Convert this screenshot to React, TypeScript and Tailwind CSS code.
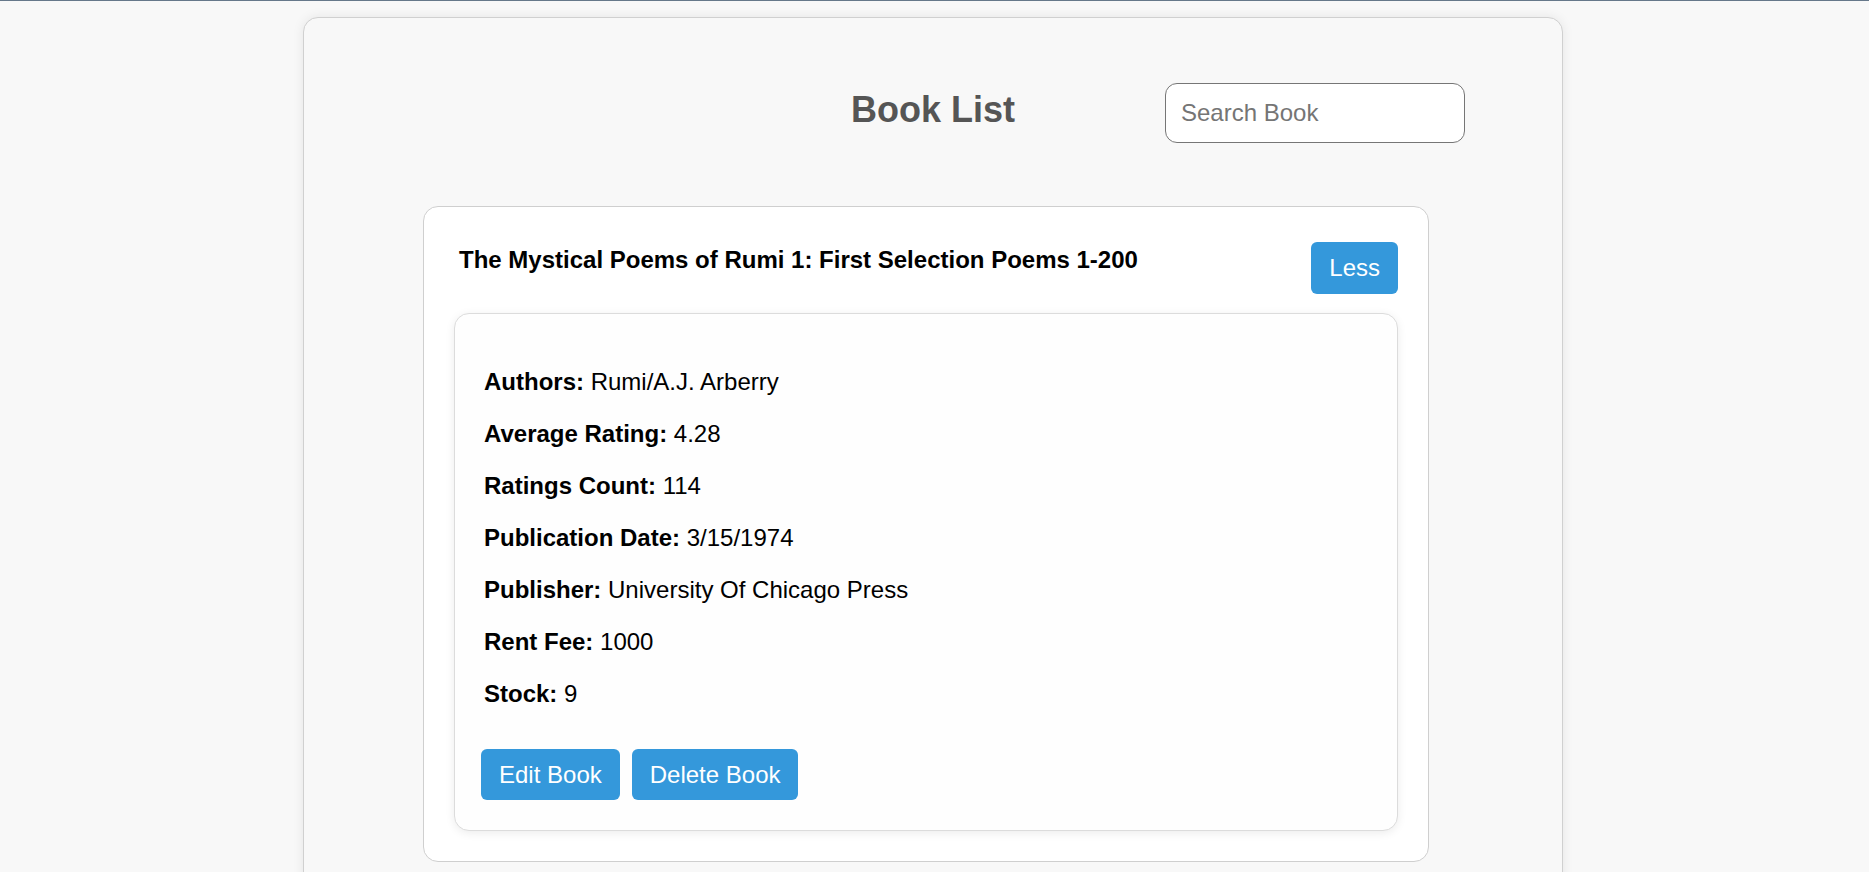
import React from 'react';

type Book = {
  title: string;
  authors: string;
  averageRating: string;
  ratingsCount: string;
  publicationDate: string;
  publisher: string;
  rentFee: string;
  stock: string;
};

const book: Book = {
  title: 'The Mystical Poems of Rumi 1: First Selection Poems 1-200',
  authors: 'Rumi/A.J. Arberry',
  averageRating: '4.28',
  ratingsCount: '114',
  publicationDate: '3/15/1974',
  publisher: 'University Of Chicago Press',
  rentFee: '1000',
  stock: '9',
};

function Detail({ label, value }: { label: string; value: string }) {
  return (
    <p className="pl-[3px] leading-[27.6px]">
      <strong className="font-bold">{label}:</strong> {value}
    </p>
  );
}

function BookCard({ data }: { data: Book }) {
  return (
    <div className="ml-[119px] w-[1006px] rounded-[15px] border border-[#cfcfcf] bg-white px-[30px] pt-[35px] pb-[30px]">
      <div className="flex items-start justify-between">
        <h3 className="ml-[5px] mt-[4px] text-[24px] font-bold leading-[27.6px] text-black">
          {data.title}
        </h3>
        <button className="rounded-[6px] bg-[#3498db] px-[18px] py-[12px] text-[24px] leading-[27.6px] text-white">
          Less
        </button>
      </div>

      <div className="mt-[19px] rounded-[15px] border border-[#dcdcdc] bg-[#fefefe] px-[26px] pt-[30px] pb-[30px] shadow-[0_2px_10px_rgba(0,0,0,0.08)]">
        <div className="mt-6 flex flex-col gap-[24.4px] text-[24px] text-black">
          <Detail label="Authors" value={data.authors} />
          <Detail label="Average Rating" value={data.averageRating} />
          <Detail label="Ratings Count" value={data.ratingsCount} />
          <Detail label="Publication Date" value={data.publicationDate} />
          <Detail label="Publisher" value={data.publisher} />
          <Detail label="Rent Fee" value={data.rentFee} />
          <Detail label="Stock" value={data.stock} />
        </div>
        <div className="mt-[41.5px] flex gap-3">
          <button className="rounded-[6px] bg-[#3498db] px-[18px] py-[12px] text-[24px] leading-[27.6px] text-white">
            Edit Book
          </button>
          <button className="rounded-[6px] bg-[#3498db] px-[18px] py-[12px] text-[24px] leading-[27.6px] text-white">
            Delete Book
          </button>
        </div>
      </div>
    </div>
  );
}

export default function App() {
  return (
    <div className="min-h-screen bg-[#f8f8f8] pr-[3px] font-['Liberation_Sans',Arial,sans-serif]">
      <div className="-mr-[3px] h-px bg-[#66788a]" />
      <div className="mx-auto mt-4 w-[1260px] rounded-[15px] border border-[#d0d0d0] bg-[#f8f8f8] pb-10 shadow-[0_0_12px_rgba(0,0,0,0.08)]">
        <div className="grid grid-cols-[1fr_auto_1fr] items-start px-[97px] pt-[65px]">
          <div />
          <h2 className="mt-[5.5px] text-[36px] font-bold leading-[41.4px] text-[#555555]">
            Book List
          </h2>
          <input
            type="text"
            placeholder="Search Book"
            className="h-[60px] w-[300px] justify-self-end rounded-[12px] border border-[#767676] bg-white px-[15px] text-[24px] text-black placeholder:text-[#757575] outline-none"
          />
        </div>

        <div className="mt-[63px]">
          <BookCard data={book} />
        </div>
      </div>
    </div>
  );
}
